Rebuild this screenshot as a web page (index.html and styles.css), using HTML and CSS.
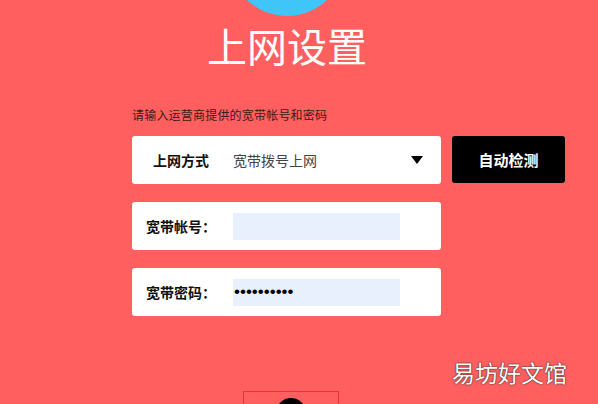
FILE: index.html
```html
<!DOCTYPE html>
<html lang="zh-CN">
<head>
	<meta charset="UTF-8" />
	<title>上网设置</title>
	<link rel="stylesheet" href="styles.css">
</head>
<body>
	<div class="page">
		<div class="logo"></div>
		<h1 class="title">上网设置</h1>
		<div class="form">
			<p class="hint">请输入运营商提供的宽带帐号和密码</p>
			<div class="row">
				<div class="box">
					<span class="label">上网方式</span>
					<span class="value">宽带拨号上网</span>
					<span class="arrow"></span>
				</div>
				<button class="detect">自动检测</button>
			</div>
			<div class="box">
				<span class="label">宽带帐号：</span>
				<span class="field"></span>
			</div>
			<div class="box">
				<span class="label">宽带密码：</span>
				<span class="field dots">••••••••••</span>
			</div>
		</div>
		<div class="next">
			<div class="knob"></div>
		</div>
	</div>
	<div class="mark">易坊好文馆</div>
</body>
</html>
```

FILE: styles.css
```css
body {
	margin: 0;
	height: 404px;
	overflow: hidden;
	background-color: #ff5f5f;
	font-family: "Noto Sans CJK SC", "Noto Sans", sans-serif;
	position: relative;
}

.page {
	display: flex;
	flex-direction: column;
	align-items: center;
	padding-right: 24px;
	height: 404px;
	overflow: hidden;
}

.logo {
	width: 116px;
	height: 116px;
	margin-top: -100px;
	border-radius: 50%;
	background-color: #3fc5f8;
	flex-shrink: 0;
}

.title {
	margin: 9px 0 0 0;
	font-size: 40px;
	line-height: 40px;
	font-weight: normal;
	color: #fff;
}

.form {
	width: 433px;
	margin-left: 132px;
	align-self: flex-start;
	display: flex;
	flex-direction: column;
	gap: 18px;
}

.hint {
	margin: 42px 0 -5px 0;
	font-size: 12px;
	line-height: 16px;
	color: #3a1c1c;
	letter-spacing: 0.2px;
}

.row {
	display: flex;
	gap: 11px;
}

.box {
	width: 309px;
	height: 48px;
	box-sizing: border-box;
	background: #fff;
	border-radius: 3px;
	display: flex;
	align-items: center;
	padding-left: 14px;
}

.row .box {
	padding-left: 21px;
}

.label {
	font-size: 14px;
	font-weight: bold;
	color: #111;
	width: 87px;
}

.row .label {
	width: 80px;
}

.value {
	font-size: 14px;
	color: #444;
	flex: 1;
}

.arrow {
	width: 0;
	height: 0;
	border-left: 6.5px solid transparent;
	border-right: 6.5px solid transparent;
	border-top: 8px solid #000;
	margin-right: 18px;
}

.detect {
	width: 113px;
	height: 47px;
	border: none;
	border-radius: 3px;
	background: #000;
	color: #fff;
	font-family: inherit;
	font-size: 15px;
	font-weight: bold;
}

.field {
	width: 167px;
	height: 27px;
	background: #e8f0fe;
	display: flex;
	align-items: center;
	color: #000;
}

.dots {
	font-family: "Liberation Sans", sans-serif;
	font-size: 17px;
	padding-left: 1px;
	box-sizing: border-box;
}

.next {
	width: 94px;
	height: 40px;
	margin-top: 75px;
	margin-left: 8px;
	border: 1px solid #e8333a;
	display: flex;
	justify-content: center;
	flex-shrink: 0;
}

.knob {
	width: 30px;
	height: 30px;
	margin-top: 6px;
	border-radius: 50%;
	background: #000;
}

.mark {
	position: absolute;
	left: 452px;
	top: 355px;
	font-size: 23px;
	color: #fff;
	text-shadow: 0 0 2px #333, 0 0 1px #333;
}
```
